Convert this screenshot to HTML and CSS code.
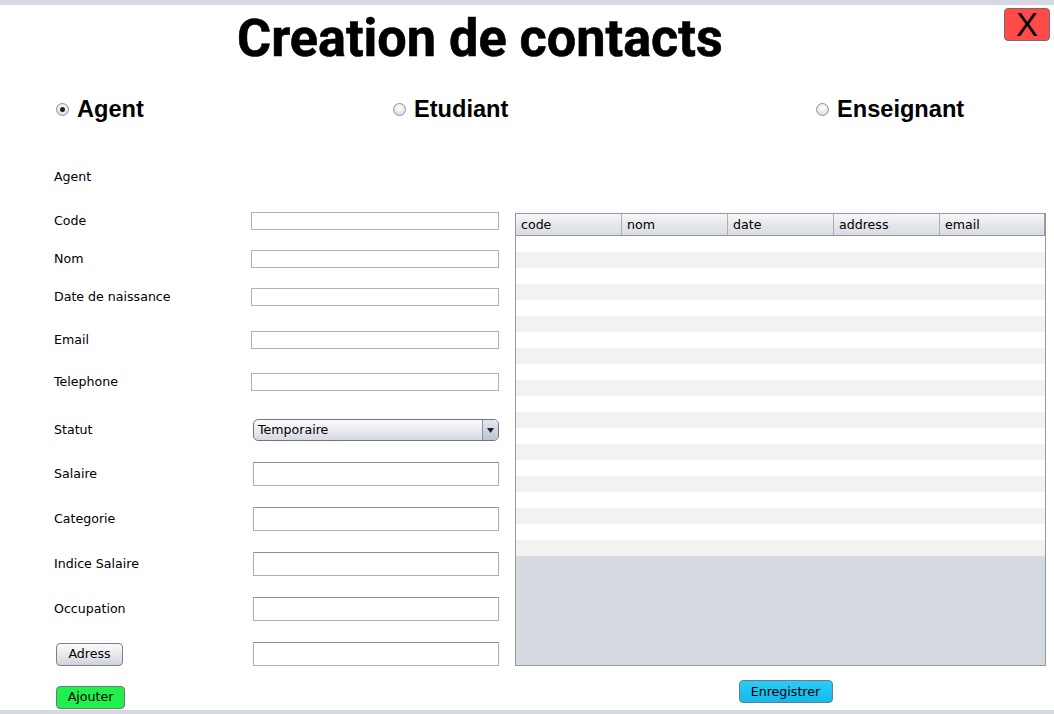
FILE: index.html
```html
<!DOCTYPE html>
<html lang="fr">
<head>
<meta charset="utf-8">
<title>Creation de contacts</title>
<link rel="stylesheet" href="styles.css">
</head>
<body>
<div class="frame">
  <div class="topbar"></div>
  <div class="content">
    <div class="header">
      <h1 class="title">Creation de contacts</h1>
      <button class="close">X</button>
    </div>
    <div class="radios">
      <label class="radio r-agent"><span class="dot checked"></span>Agent</label>
      <label class="radio r-etud"><span class="dot"></span>Etudiant</label>
      <label class="radio r-ens"><span class="dot"></span>Enseignant</label>
    </div>
    <div class="body">
      <div class="form">
        <div class="row r1"><span class="lbl">Agent</span></div>
        <div class="row r2"><span class="lbl">Code</span><span class="field small"></span></div>
        <div class="row r3"><span class="lbl">Nom</span><span class="field small"></span></div>
        <div class="row r3"><span class="lbl">Date de naissance</span><span class="field small"></span></div>
        <div class="row r4"><span class="lbl">Email</span><span class="field small"></span></div>
        <div class="row r5"><span class="lbl">Telephone</span><span class="field small"></span></div>
        <div class="row r6"><span class="lbl">Statut</span><span class="combo"><span class="combo-text">Temporaire</span><span class="combo-btn"><svg width="7" height="5" viewBox="0 0 7 5"><path d="M0 0H7L3.5 5Z" fill="#222"/></svg></span></span></div>
        <div class="row r7"><span class="lbl">Salaire</span><span class="field big"></span></div>
        <div class="row r7"><span class="lbl">Categorie</span><span class="field big"></span></div>
        <div class="row r7"><span class="lbl">Indice Salaire</span><span class="field big"></span></div>
        <div class="row r7"><span class="lbl">Occupation</span><span class="field big"></span></div>
        <div class="row r7"><span class="lbl-btn"><button class="btn gray">Adress</button></span><span class="field big"></span></div>
        <div class="row r8"><button class="btn green">Ajouter</button></div>
      </div>
      <div class="right">
        <div class="table">
          <div class="thead">
            <span class="th">code</span>
            <span class="th">nom</span>
            <span class="th">date</span>
            <span class="th">address</span>
            <span class="th last">email</span>
          </div>
          <div class="tbody">
            <div class="tr"></div><div class="tr"></div><div class="tr"></div><div class="tr"></div>
            <div class="tr"></div><div class="tr"></div><div class="tr"></div><div class="tr"></div>
            <div class="tr"></div><div class="tr"></div><div class="tr"></div><div class="tr"></div>
            <div class="tr"></div><div class="tr"></div><div class="tr"></div><div class="tr"></div>
            <div class="tr"></div><div class="tr"></div><div class="tr"></div><div class="tr"></div>
          </div>
        </div>
        <div class="actions"><button class="btn blue">Enregistrer</button></div>
      </div>
    </div>
  </div>
  <div class="bottombar"></div>
</div>
</body>
</html>
```

FILE: styles.css
```css
* { box-sizing: border-box; }
html, body { margin: 0; padding: 0; background: #fff; }
body { width: 1054px; height: 714px; overflow: hidden; font-family: "DejaVu Sans", sans-serif; color: #000; }

.frame { width: 1054px; height: 714px; display: flex; flex-direction: column; position: relative; }
.topbar { height: 5px; background: #d6d9e0; flex: none; }
.bottombar { height: 4px; background: #d6d9e0; flex: none; }
.content { flex: 1; position: relative; }

.header { height: 70px; position: relative; }
.title {
  margin: 0; padding: 0 0 0 237px;
  font-family: Roboto, "Liberation Sans", sans-serif; font-weight: 700; font-size: 52.2px;
  line-height: 68px; letter-spacing: 0;
  -webkit-text-stroke: 0.6px #000;
}
.close {
  position: absolute; right: 4px; top: 3px;
  width: 46px; height: 33px; padding: 0;
  background: #ff4a4a; border: 1px solid #6e6e6e; border-radius: 4px;
  font-family: "Liberation Sans", sans-serif; font-size: 33px; line-height: 30px; color: #000;
}

.radios { height: 66px; position: relative; }
.radio {
  display: flex; align-items: center; gap: 8px;
  font-family: "Liberation Sans", Arial, sans-serif; font-weight: 700; font-size: 23.6px;
  position: absolute; top: 21px;
}
.r-agent { left: 56px; }
.r-etud { left: 393px; }
.r-ens { left: 816px; }
.dot {
  width: 13px; height: 13px; border-radius: 50%;
  border: 1px solid #8c919b;
  background: radial-gradient(circle at 50% 35%, #ffffff 0%, #eef0f3 40%, #c9cdd4 100%);
  position: relative; flex: none;
}
.dot.checked::after {
  content: ""; position: absolute; left: 3px; top: 3px; width: 5px; height: 5px; border-radius: 50%;
  background: #1d1f24;
}

.body { display: flex; }
.form { width: 515px; padding-left: 54px; padding-top: 27px; display: flex; flex-direction: column; }
.row { display: flex; align-items: center; font-size: 12.6px; }
.lbl { width: 197px; flex: none; margin-top: -2px; }
.lbl-btn { width: 197px; flex: none; padding-left: 2px; }
.r1 { height: 18px; }
.r2 { height: 18px; margin-top: 26px; }
.r3 { height: 18px; margin-top: 20px; }
.r4 { height: 18px; margin-top: 25px; }
.r5 { height: 18px; margin-top: 24px; }
.r6 { height: 22px; margin-top: 28px; }
.r7 { height: 24px; margin-top: 21px; }
.r8 { height: 24px; margin-top: 19px; padding-left: 2px; }

.field { display: block; height: 18px; border: 1px solid #b1b1b1; background: #fff; }
.field.small { width: 248px; }
.field.big { width: 246px; height: 24px; margin-left: 2px; border-color: #aeaeae; border-top-color: #8f8f8f; }

.combo {
  margin-left: 2px; width: 246px; height: 22px; display: flex; align-items: stretch;
  border: 1px solid #6f7480; border-radius: 5px; overflow: hidden;
  background: linear-gradient(#fbfbfc, #e6e8ec 60%, #d6d9df);
}
.combo-text { flex: 1; padding-left: 4px; font-size: 12.6px; line-height: 20px; }
.combo-btn {
  width: 16px; border-left: 1px solid #8b909b;
  background: linear-gradient(#e3e9f1, #b8c4d3);
  display: flex; align-items: center; justify-content: center;
}

.btn {
  font-family: "DejaVu Sans", sans-serif; font-size: 12.6px; color: #000;
  border: 1px solid #7d8088; border-radius: 4px; padding: 0; height: 24px; line-height: 20px;
}
.btn.gray { width: 67px; height: 23px; background: linear-gradient(#fbfbfc, #e3e5ea 60%, #cfd2d9); }
.btn.green { width: 69px; height: 23px; background: #1ff04b; border-color: #6f7a70; }
.btn.blue { width: 94px; height: 23px; background: linear-gradient(#2ccbf5, #12b9ee); border-color: #6d7d88; }

.right { width: 531px; padding-top: 72px; display: flex; flex-direction: column; }
.table {
  height: 453px; border: 1px solid #9198a3; background: #d6d9e0;
  display: flex; flex-direction: column;
}
.thead {
  height: 22px; display: flex; flex: none;
  background: linear-gradient(#f6f7f9, #e4e6ea 55%, #d9dce2);
  border-bottom: 1px solid #8f96a1;
}
.th {
  width: 106px; padding-left: 5px; font-size: 12.6px; line-height: 21px;
  border-right: 1px solid #a8adb6;
}
.th.last { width: 105px; border-right: 1px solid #9aa0aa; }
.tbody { display: flex; flex-direction: column; }
.tr { height: 16px; background: #fff; }
.tr:nth-child(even) { background: #f2f2f2; }

.actions { display: flex; justify-content: center; padding-top: 14px; padding-left: 10px; }
```
